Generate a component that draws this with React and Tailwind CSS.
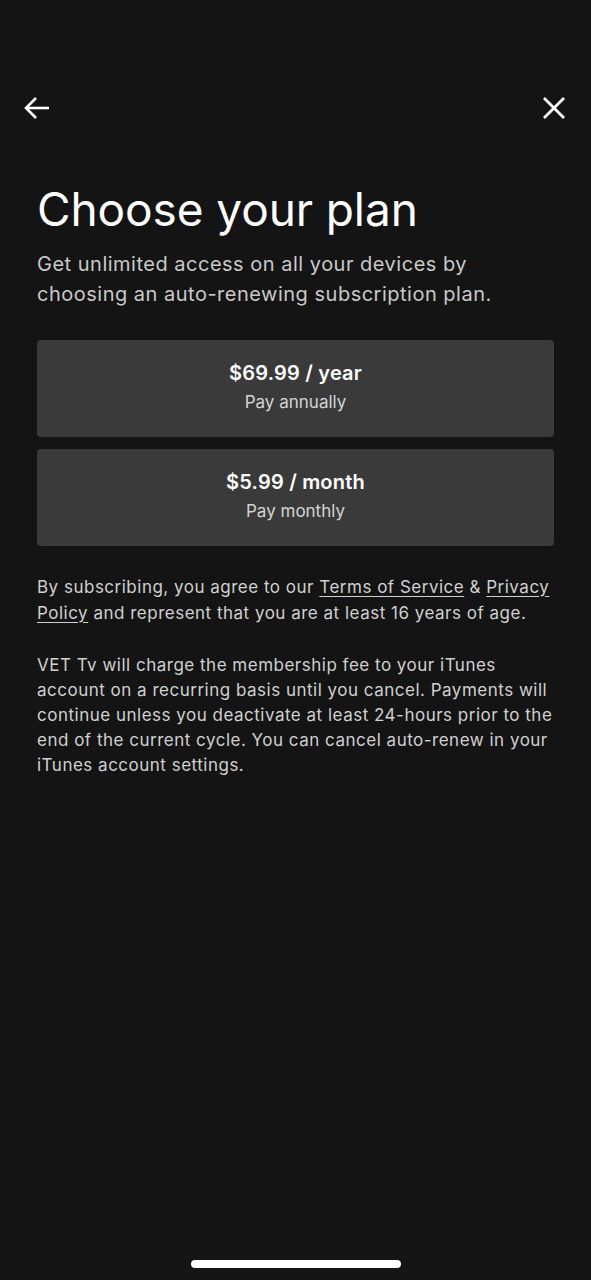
export default function App() {
  return (
    <div className="w-[591px] h-[1280px] bg-[#141414] relative overflow-hidden" style={{ fontFamily: "Inter, 'Noto Sans', sans-serif" }}>
      <div className="flex justify-between items-center px-[24px] pt-[96px] h-[120px]">
        <svg width="26" height="24" viewBox="0 0 26 24" fill="none" stroke="white" strokeWidth="2.6" strokeLinecap="butt" strokeLinejoin="miter">
          <path d="M25 12H3" />
          <path d="M12 2L2 12L12 22" />
        </svg>
        <svg width="24" height="24" viewBox="0 0 24 24" fill="none" stroke="white" strokeWidth="2.8" className="mr-[1px]">
          <path d="M2 2L22 22M22 2L2 22" />
        </svg>
      </div>
      <div className="px-[37px]">
        <h1 className="text-white text-[46px] leading-[56px] mt-[61px] tracking-[-0.1px]">Choose your plan</h1>
        <p className="text-[#c9c9c9] text-[20px] leading-[30px] mt-[12px] tracking-[0.5px]">
          Get unlimited access on all your devices by<br />choosing an auto-renewing subscription plan.
        </p>
        <div className="flex flex-col gap-[12px] mt-[31px]">
          <div className="h-[97px] bg-[#3a3a3a] rounded-[4px] flex flex-col items-center justify-center pb-[4px]">
            <div className="text-white font-semibold text-[20px] leading-[28px] tracking-[0.2px]">$69.99 / year</div>
            <div className="text-[#d4d4d4] text-[17px] leading-[24px] mt-[3px]">Pay annually</div>
          </div>
          <div className="h-[97px] bg-[#3a3a3a] rounded-[4px] flex flex-col items-center justify-center pb-[4px]">
            <div className="text-white font-semibold text-[20px] leading-[28px] tracking-[0.2px]">$5.99 / month</div>
            <div className="text-[#d4d4d4] text-[17px] leading-[24px] mt-[3px]">Pay monthly</div>
          </div>
        </div>
        <p className="text-[#d0d0d0] text-[17px] leading-[26px] mt-[28px] tracking-[0.5px] whitespace-nowrap">
          By subscribing, you agree to our <span className="underline underline-offset-[3px]">Terms of Service</span> &amp; <span className="underline underline-offset-[3px]">Privacy</span>
          <br />
          <span className="underline underline-offset-[3px]">Policy</span> and represent that you are at least 16 years of age.
        </p>
        <p className="text-[#d0d0d0] text-[17px] leading-[25px] mt-[27px] tracking-[0.5px] whitespace-nowrap">
          VET Tv will charge the membership fee to your iTunes<br />
          account on a recurring basis until you cancel. Payments will<br />
          continue unless you deactivate at least 24-hours prior to the<br />
          end of the current cycle. You can cancel auto-renew in your<br />
          iTunes account settings.
        </p>
      </div>
      <div className="absolute left-[191px] top-[1260px] w-[210px] h-[8px] rounded-full bg-white"></div>
    </div>
  );
}
